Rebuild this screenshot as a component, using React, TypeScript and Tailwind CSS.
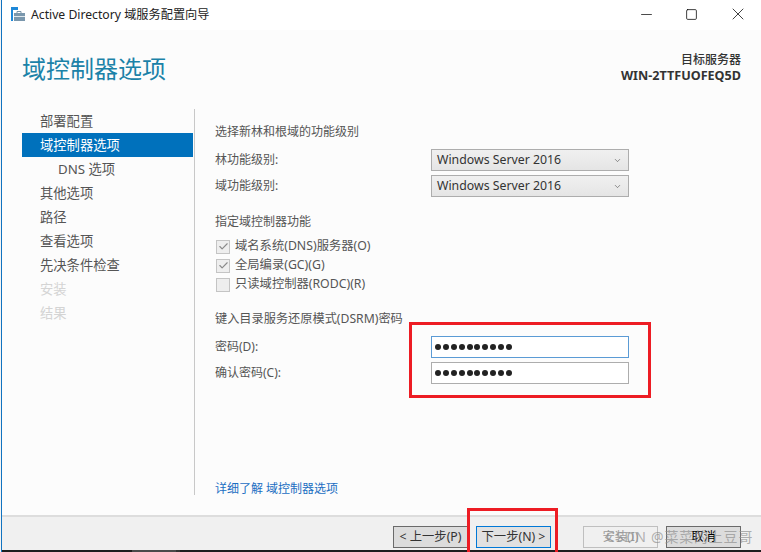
import { Check, ChevronDown, Minus, Square, X } from 'lucide-react';

const FONT = "font-['Noto_Sans','Noto_Sans_CJK_SC',sans-serif]";

const STEPS = [
  { label: '部署配置', state: 'normal' },
  { label: '域控制器选项', state: 'active' },
  { label: 'DNS 选项', state: 'sub' },
  { label: '其他选项', state: 'normal' },
  { label: '路径', state: 'normal' },
  { label: '查看选项', state: 'normal' },
  { label: '先决条件检查', state: 'normal' },
  { label: '安装', state: 'disabled' },
  { label: '结果', state: 'disabled' },
];

const STEP_CLASS: Record<string, string> = {
  normal: 'pl-[18px] text-[#555555]',
  active: 'pl-[18px] bg-[#0071bc] text-white',
  sub: 'pl-[36px] text-[#555555]',
  disabled: 'pl-[18px] text-[#d4d4d4]',
};

function WizardIcon() {
  return (
    <svg width="16" height="16" viewBox="0 0 16 16" className="shrink-0">
      <rect x="0" y="0" width="7" height="3" fill="#1e88d8" />
      <rect x="0" y="3" width="2" height="11" fill="#1e88d8" />
      <path d="M6 4.5h4M6 4.5v2M10 4.5v2" stroke="#7a94a8" fill="none" />
      <rect x="3" y="6" width="11" height="8" fill="#7a97ad" />
      <rect x="3" y="9" width="11" height="1" fill="#dfe7ec" />
    </svg>
  );
}

function Select({ value }: { value: string }) {
  return (
    <div className="flex h-[22px] w-[198px] items-center justify-between border border-[#adadad] bg-gradient-to-b from-[#f0f0f0] to-[#e5e5e5] pl-[5px] pr-[6px] text-[12.3px] text-[#333333]">
      <span>{value}</span>
      <ChevronDown size={9} strokeWidth={1.5} className="text-[#444444]" />
    </div>
  );
}

function Password({ focused }: { focused?: boolean }) {
  return (
    <div className={`flex h-[22px] w-[198px] items-center gap-[1.9px] border bg-white pl-[3px] ${focused ? 'border-[#5b9bd5]' : 'border-[#adadad]'}`}>
      {Array.from({ length: 10 }).map((_, i) => (
        <span key={i} className="size-[6px] rounded-full bg-[#222222]" />
      ))}
    </div>
  );
}

function CheckRow({ label, checked }: { label: string; checked?: boolean }) {
  return (
    <div className="flex h-[19px] items-center text-[12.3px] text-[#555555]">
      <span className="ml-[1px] mr-[5px] flex size-[14px] items-center justify-center border border-[#c4c4c4] bg-[#eeeeee]">
        {checked && <Check size={11} strokeWidth={2.5} className="text-[#8a8a8a]" />}
      </span>
      {label}
    </div>
  );
}

function Button({ label, variant }: { label: string; variant?: 'focus' | 'disabled' | 'strong' }) {
  const look =
    variant === 'focus'
      ? 'border border-[#0078d7] bg-[#e1e1e1] text-[#333333]'
      : variant === 'disabled'
        ? 'border border-[#bfbfbf] bg-[#f0f0f0] text-[#9a9a9a]'
        : variant === 'strong'
          ? 'border border-[#6a6a6a] bg-[#dcdcdc] text-black'
          : 'border border-[#6a6a6a] bg-[#dcdcdc] text-[#333333]';
  return (
    <div className={`flex h-[22px] w-[75px] items-center justify-center text-[12.3px] ${look}`}>{label}</div>
  );
}

export default function App() {
  return (
    <div className={`relative flex h-[552px] w-[761px] overflow-hidden bg-white ${FONT}`}>
      <div className="w-[1px] bg-[#f4f4f4]" />
      <div className="w-[1px] bg-[#1173c0]" />

      <div className="flex min-w-0 flex-1 flex-col">
        <div className="flex h-[30px] items-center bg-white pl-[9px] text-[12.2px] text-[#222222]">
          <WizardIcon />
          <span className="ml-[4px]">Active Directory 域服务配置向导</span>
          <div className="mb-[2px] ml-auto flex items-center">
            <Minus size={17} strokeWidth={1} className="mr-[30px] text-black" />
            <Square size={13} strokeWidth={1.4} className="mr-[30px] text-black" />
            <X size={20} strokeWidth={0.9} className="mr-[13px] text-black" />
          </div>
        </div>

        <div className="flex min-h-0 flex-1 flex-col bg-[#fcfcfc]">
          <div className="flex h-[79px] items-start justify-between pl-[20px] pr-[20px]">
            <h1 className="mt-[19px] text-[24px] leading-[40px] font-normal text-[#1b82a8]">域控制器选项</h1>
            <div className="mt-[22px] text-right text-[12px] leading-[16px] font-medium text-[#333333]">
              <div>目标服务器</div>
              <div className="text-[12.6px] font-bold">WIN-2TTFUOFEQ5D</div>
            </div>
          </div>

          <div className="flex h-[386px] pl-[20px]">
            <div className="w-[171px] text-[13.3px]">
              {STEPS.map((step) => (
                <div key={step.label} className={`flex h-[24px] items-center pt-[1px] ${STEP_CLASS[step.state]}`}>
                  {step.label}
                </div>
              ))}
            </div>
            <div className="ml-[1px] w-[1px] bg-[#c8c8c8]" />

            <div className="flex flex-1 flex-col pl-[20px] pt-[13px] text-[12px] text-[#555555]">
              <div className="h-[20px] leading-[20px]">选择新林和根域的功能级别</div>
              <div className="mt-[7px] flex flex-col gap-[4px]">
                <div className="flex items-center justify-between pr-[132px]">
                  <span>林功能级别:</span>
                  <Select value="Windows Server 2016" />
                </div>
                <div className="flex items-center justify-between pr-[132px]">
                  <span>域功能级别:</span>
                  <Select value="Windows Server 2016" />
                </div>
              </div>

              <div className="mt-[15px] h-[20px] leading-[20px]">指定域控制器功能</div>
              <div className="mt-[5px]">
                <CheckRow label="域名系统(DNS)服务器(O)" checked />
                <CheckRow label="全局编录(GC)(G)" checked />
                <CheckRow label="只读域控制器(RODC)(R)" />
              </div>

              <div className="mt-[15px] h-[20px] text-[12.2px] leading-[20px]">键入目录服务还原模式(DSRM)密码</div>
              <div className="mt-[7px] flex flex-col gap-[4px]">
                <div className="flex items-center justify-between pr-[132px]">
                  <span>密码(D):</span>
                  <Password focused />
                </div>
                <div className="flex items-center justify-between pr-[132px]">
                  <span>确认密码(C):</span>
                  <Password />
                </div>
              </div>

              <div className="mt-auto mb-[-4px] h-[20px] leading-[20px] text-[#1b6ec2]">详细了解 域控制器选项</div>
            </div>
          </div>

          <div className="h-[20px]" />
        </div>

        <div className="flex h-[35px] items-start justify-end gap-[8px] border-t-2 border-[#dddddd] bg-[#f0f0f0] pr-[20px] pt-[9px]">
          <Button label="< 上一步(P)" />
          <Button label="下一步(N) >" variant="focus" />
          <div className="w-[16px]" />
          <Button label="安装(I)" variant="disabled" />
          <Button label="取消" variant="strong" />
        </div>
        <div className="flex h-[2px] bg-[#1e1e1e]">
          <div className="ml-[130px] w-[44px] bg-[#4a4a4a]" />
          <div className="w-[4px] bg-[#333333]" />
        </div>
      </div>

      {/* red annotations over the dialog */}
      <div className="absolute left-[409px] top-[322px] h-[76px] w-[242px] border-[3px] border-[#ed1c24]" />
      <div className="absolute left-[467px] top-[508px] h-[44px] w-[91px] border-[3px] border-b-0 border-[#ed1c24]" />

      {/* watermark */}
      <div className="absolute left-[606px] top-[527px] text-[14px] leading-[20px] tracking-[0.8px] whitespace-nowrap text-[#8f8f8f]/70">
        CSDN @菜菜的上豆哥
      </div>
    </div>
  );
}
